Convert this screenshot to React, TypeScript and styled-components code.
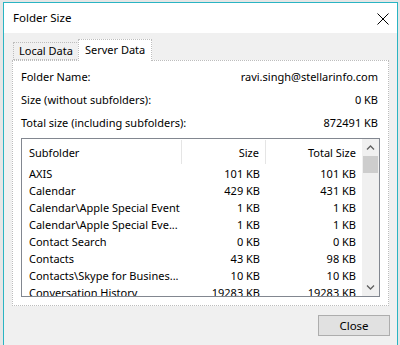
import styled, { createGlobalStyle } from "styled-components";

const GlobalStyle = createGlobalStyle`
    html, body {
        margin: 0;
        padding: 0;
        background: #e6e6e6;
        font-family: "Noto Sans", "Open Sans", sans-serif;
        font-size: 11px;
        color: #000;
    }
`;

const Window = styled.div`
    margin: 2px 0 0 3px;
    width: 393px;
    height: 343px;
    border: 1px solid #2ab4c3;
    border-bottom: none;
    background: #f0f0f0;
    display: flex;
    flex-direction: column;
    overflow: hidden;
`;

const TitleBar = styled.div`
    height: 30px;
    background: #fff;
    display: flex;
    align-items: center;
    justify-content: space-between;
    padding: 0 8px 0 9px;
`;

const Title = styled.span`
    font-size: 11.5px;
    margin-top: -2px;
`;

const CloseX = styled.svg`
    width: 12px;
    height: 12px;
    margin-top: 1px;
`;

const Body = styled.div`
    flex: 1;
    padding: 6px 7px 0 8px;
    display: flex;
    flex-direction: column;
`;

const Tabs = styled.div`
    display: flex;
    align-items: flex-end;
    height: 21px;
    padding-left: 1px;
    position: relative;
    z-index: 1;
`;

const Tab = styled.div<{ $active?: boolean }>`
    box-sizing: border-box;
    height: ${({ $active }) => ($active ? "22px" : "18px")};
    padding: 0 ${({ $active }) => ($active ? "6px" : "5px")};
    margin-bottom: ${({ $active }) => ($active ? "-1px" : "0")};
    margin-left: ${({ $active }) => ($active ? "-1px" : "0")};
    background: ${({ $active }) => ($active ? "#fff" : "#f0f0f0")};
    border: 1px dotted #bdbdbd;
    border-bottom: ${({ $active }) => ($active ? "none" : "1px dotted #bdbdbd")};
    display: flex;
    align-items: ${({ $active }) => ($active ? "flex-start" : "center")};
    padding-top: ${({ $active }) => ($active ? "2px" : "0")};
    line-height: 16px;
`;

const Panel = styled.div`
    box-sizing: border-box;
    width: 377px;
    height: 246px;
    background: #fff;
    border: 1px dotted #bdbdbd;
    padding: 4px 10px 0 8px;
    display: flex;
    flex-direction: column;
`;

const InfoRow = styled.div`
    height: 23px;
    display: flex;
    align-items: center;
    justify-content: space-between;
`;

const List = styled.div`
    box-sizing: border-box;
    margin-top: 4px;
    width: 359px;
    height: 159px;
    border: 1px solid #828790;
    display: flex;
    overflow: hidden;
`;

const Columns = styled.div`
    width: 340px;
    display: flex;
    flex-direction: column;
`;

const HeaderRow = styled.div`
    height: 26px;
    display: grid;
    grid-template-columns: 160px 84px 96px;
    flex-shrink: 0;
`;

const HeaderCell = styled.div<{ $right?: boolean; $sep?: boolean }>`
    display: flex;
    align-items: center;
    justify-content: ${({ $right }) => ($right ? "flex-end" : "flex-start")};
    padding: 0 6px 0 7px;
    border-right: ${({ $sep }) => ($sep ? "1px solid #e5e5e5" : "none")};
    margin: 1px 0 0;
    height: 24px;
`;

const Row = styled.div`
    height: 17px;
    display: grid;
    grid-template-columns: 160px 84px 96px;
    flex-shrink: 0;
`;

const Cell = styled.div<{ $right?: boolean }>`
    white-space: nowrap;
    text-align: ${({ $right }) => ($right ? "right" : "left")};
    padding: 0 ${({ $right }) => ($right ? "6px" : "0")} 0 7px;
    line-height: 17px;
`;

const ScrollBar = styled.div`
    width: 17px;
    background: #f0f0f0;
    display: flex;
    flex-direction: column;
    align-items: center;
`;

const Arrow = styled.svg`
    width: 9px;
    height: 17px;
    flex-shrink: 0;
`;

const Thumb = styled.div`
    width: 15px;
    height: 17px;
    background: #cdcdcd;
`;

const Track = styled.div`
    flex: 1;
`;

const Footer = styled.div`
    display: flex;
    justify-content: flex-end;
    padding-top: 9px;
`;

const Button = styled.button`
    box-sizing: border-box;
    width: 72px;
    height: 21px;
    background: #e1e1e1;
    border: 1px solid #adadad;
    font-family: inherit;
    font-size: 11.5px;
    color: #000;
    padding: 0;
`;

const rows = [
    ["AXIS", "101 KB", "101 KB"],
    ["Calendar", "429 KB", "431 KB"],
    ["Calendar\\Apple Special Event", "1 KB", "1 KB"],
    ["Calendar\\Apple Special Eve...", "1 KB", "1 KB"],
    ["Contact Search", "0 KB", "0 KB"],
    ["Contacts", "43 KB", "98 KB"],
    ["Contacts\\Skype for Busines...", "10 KB", "10 KB"],
    ["Conversation History", "19283 KB", "19283 KB"],
];

export default function App() {
    return (
        <>
            <GlobalStyle />
            <Window>
                <TitleBar>
                    <Title>Folder Size</Title>
                    <CloseX viewBox="0 0 12 12">
                        <path d="M0.5 0.5 L11.5 11.5 M11.5 0.5 L0.5 11.5" stroke="#000" strokeWidth="1" />
                    </CloseX>
                </TitleBar>
                <Body>
                    <Tabs>
                        <Tab>Local Data</Tab>
                        <Tab $active>Server Data</Tab>
                    </Tabs>
                    <Panel>
                        <InfoRow>
                            <span>Folder Name:</span>
                            <span>ravi.singh@stellarinfo.com</span>
                        </InfoRow>
                        <InfoRow>
                            <span>Size (without subfolders):</span>
                            <span>0 KB</span>
                        </InfoRow>
                        <InfoRow>
                            <span>Total size (including subfolders):</span>
                            <span>872491 KB</span>
                        </InfoRow>
                        <List>
                            <Columns>
                                <HeaderRow>
                                    <HeaderCell $sep>Subfolder</HeaderCell>
                                    <HeaderCell $right $sep>Size</HeaderCell>
                                    <HeaderCell $right>Total Size</HeaderCell>
                                </HeaderRow>
                                {rows.map(([name, size, total]) => (
                                    <Row key={name}>
                                        <Cell>{name}</Cell>
                                        <Cell $right>{size}</Cell>
                                        <Cell $right>{total}</Cell>
                                    </Row>
                                ))}
                            </Columns>
                            <ScrollBar>
                                <Arrow viewBox="0 0 9 17">
                                    <path d="M1 10.5 L4.5 7 L8 10.5" fill="none" stroke="#606060" strokeWidth="1.3" />
                                </Arrow>
                                <Thumb />
                                <Track />
                                <Arrow viewBox="0 0 9 17">
                                    <path d="M1 6.5 L4.5 10 L8 6.5" fill="none" stroke="#606060" strokeWidth="1.3" />
                                </Arrow>
                            </ScrollBar>
                        </List>
                    </Panel>
                    <Footer>
                        <Button>Close</Button>
                    </Footer>
                </Body>
            </Window>
        </>
    );
}
